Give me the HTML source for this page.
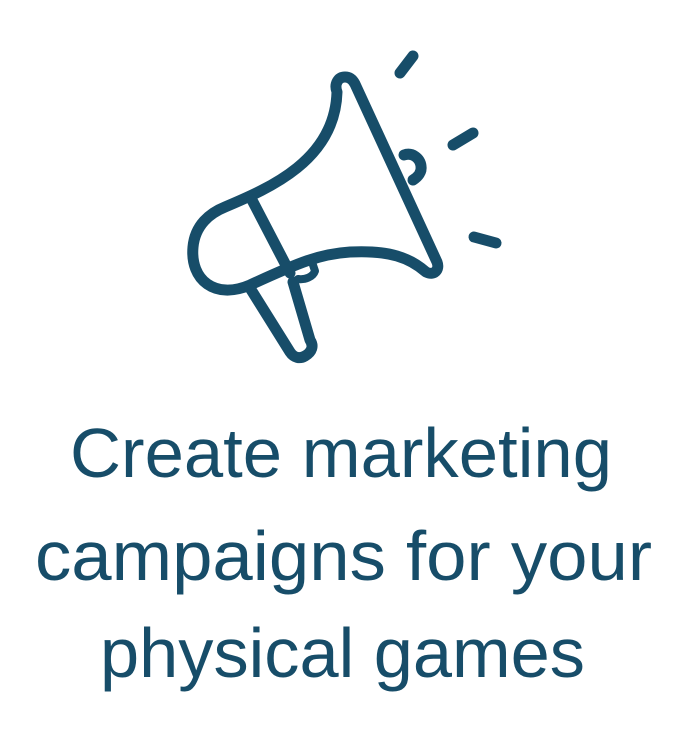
<!DOCTYPE html>
<html><head><style>
html,body{margin:0;padding:0;background:#fff;}
svg{display:block}
</style></head><body>
<svg width="682" height="735" viewBox="0 0 682 735" xmlns="http://www.w3.org/2000/svg">
<g fill="none" stroke="#174d69" stroke-width="11" stroke-linecap="round" stroke-linejoin="round">
  <path d="M337 92 C334 84 338 77 345 77 C350 77 353 80 355 84 L437 262 C440 270 434 276 426 272 C410 258 390 250 350 252 C320 254 300 262 250 285 C215 300 190 280 193 247 C195 225 210 213 225 207 C270 188 335 160 337 92 Z"/>
  <path d="M252 200 L290 273"/>
  <path d="M250 288 L290 352 C294 358 300 359 305 356 C312 352 314 346 310 340 L293 282"/>
  <path d="M312 262 L315 271 C313 277 305 280 298 279" stroke-width="8"/>
  <path d="M404 155 C412 152 420 158 421 166 C422 172 418 177 413 180"/>
  <path d="M400 73 L413 56"/>
  <path d="M453 145 L473 133"/>
  <path d="M474 237 L496 243"/>
</g>
<g fill="#174d69" font-family="Liberation Sans, sans-serif" font-size="70" text-anchor="start">
  <text x="70" y="477" textLength="542" lengthAdjust="spacingAndGlyphs">Create marketing</text>
  <text x="35" y="580" textLength="617" lengthAdjust="spacingAndGlyphs">campaigns for your</text>
  <text x="100" y="677" textLength="485" lengthAdjust="spacingAndGlyphs">physical games</text>
</g>
</svg>
</body></html>
